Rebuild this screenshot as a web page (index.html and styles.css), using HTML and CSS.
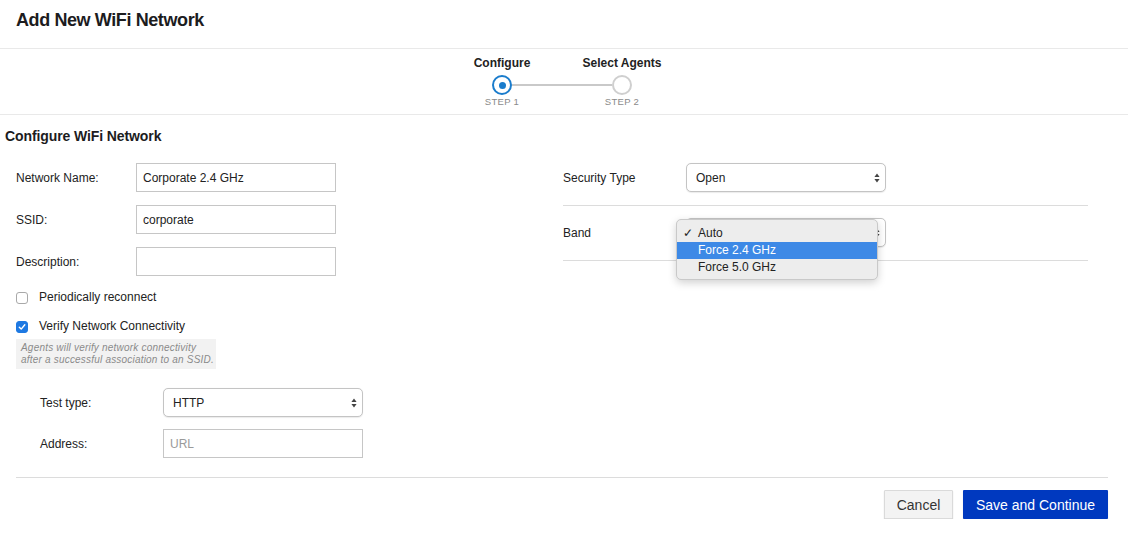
FILE: index.html
```html
<!DOCTYPE html>
<html>
<head>
<meta charset="utf-8">
<link rel="stylesheet" href="styles.css">
</head>
<body>
<div class="page">
  <header class="header">
    <h1 class="title">Add New WiFi Network</h1>
  </header>

  <div class="stepper">
    <div class="steps">
      <div class="step-title s1">Configure</div>
      <div class="step-title s2">Select Agents</div>
      <div class="circle active"><span class="dot"></span></div>
      <div class="connector"></div>
      <div class="circle"></div>
      <div class="step-label s1">STEP 1</div>
      <div class="step-label s2">STEP 2</div>
    </div>
  </div>

  <main class="content">
    <h2 class="section-title">Configure WiFi Network</h2>
    <div class="columns">
      <div class="col-left">
        <div class="field">
          <label class="label">Network Name:</label>
          <div class="input">Corporate 2.4 GHz</div>
        </div>
        <div class="field">
          <label class="label">SSID:</label>
          <div class="input">corporate</div>
        </div>
        <div class="field">
          <label class="label">Description:</label>
          <div class="input"></div>
        </div>

        <div class="check-row first">
          <span class="checkbox"></span>
          <span class="check-text">Periodically reconnect</span>
        </div>
        <div class="check-row">
          <span class="checkbox checked">
            <svg width="8" height="8" viewBox="0 0 8 8"><path d="M1.3 4.3 L3.2 6.1 L6.8 1.8" fill="none" stroke="#fff" stroke-width="1.4" stroke-linecap="round" stroke-linejoin="round"/></svg>
          </span>
          <span class="check-text">Verify Network Connectivity</span>
        </div>
        <div class="help">Agents will verify network connectivity<br>after a successful association to an SSID.</div>

        <div class="sub-fields">
          <div class="field sub">
            <label class="label">Test type:</label>
            <div class="select">HTTP
              <svg class="arrows" width="6" height="10" viewBox="0 0 6 10"><path d="M3 0.5 L5.6 4 L0.4 4 Z M3 9.5 L5.6 6 L0.4 6 Z" fill="#444"/></svg>
            </div>
          </div>
          <div class="field sub">
            <label class="label">Address:</label>
            <div class="input placeholder">URL</div>
          </div>
        </div>
      </div>

      <div class="col-right">
        <div class="rfield">
          <label class="label rlabel">Security Type</label>
          <div class="select">Open
            <svg class="arrows" width="6" height="10" viewBox="0 0 6 10"><path d="M3 0.5 L5.6 4 L0.4 4 Z M3 9.5 L5.6 6 L0.4 6 Z" fill="#444"/></svg>
          </div>
        </div>
        <div class="rfield">
          <label class="label rlabel">Band</label>
          <div class="select-wrap">
            <div class="select">Auto
              <svg class="arrows" width="6" height="10" viewBox="0 0 6 10"><path d="M3 0.5 L5.6 4 L0.4 4 Z M3 9.5 L5.6 6 L0.4 6 Z" fill="#444"/></svg>
            </div>
            <ul class="menu">
              <li class="opt"><span class="tick">✓</span>Auto</li>
              <li class="opt hl">Force 2.4 GHz</li>
              <li class="opt">Force 5.0 GHz</li>
            </ul>
          </div>
        </div>
      </div>
    </div>

    <div class="footer">
      <button class="btn cancel">Cancel</button>
      <button class="btn primary">Save and Continue</button>
    </div>
  </main>
</div>
</body>
</html>
```

FILE: styles.css
```css
* { box-sizing: border-box; }
html, body { margin: 0; padding: 0; background: #fff; }
body {
  font-family: "Liberation Sans", Arial, sans-serif;
  color: #222;
  font-size: 12px;
}
.page { width: 1128px; }

.header {
  height: 49px;
  padding: 9px 16px 0;
  border-bottom: 1px solid #e9e9e9;
}
.title {
  margin: 0;
  font-size: 18px;
  line-height: 22px;
  font-weight: bold;
  letter-spacing: -0.4px;
  color: #1c1c1e;
}

.stepper {
  height: 66px;
  border-bottom: 1px solid #e9e9e9;
  display: flex;
  justify-content: center;
  padding: 7px 4px 0 0;
}
.steps {
  display: grid;
  grid-template-columns: 20px 100px 20px;
  grid-template-rows: 14px 25px 18px;
  align-items: start;
}
.step-title {
  font-weight: bold;
  font-size: 12px;
  line-height: 14px;
  white-space: nowrap;
  justify-self: center;
  color: #222;
}
.step-title.s1 { grid-column: 1; grid-row: 1; }
.step-title.s2 { grid-column: 3; grid-row: 1; }
.circle {
  grid-row: 2;
  margin-top: 5px;
  width: 20px;
  height: 20px;
  border-radius: 50%;
  border: 2px solid #cfcfcf;
  display: flex;
  align-items: center;
  justify-content: center;
}
.circle.active { grid-column: 1; border-color: #1a7ccc; }
.circle:not(.active) { grid-column: 3; }
.dot { width: 7px; height: 7px; border-radius: 50%; background: #1a7ccc; }
.connector {
  grid-column: 2;
  grid-row: 2;
  margin-top: 14px;
  height: 2px;
  background: #c9c9c9;
}
.step-label {
  grid-row: 3;
  margin-top: 1px;
  font-size: 9.5px;
  line-height: 12px;
  color: #8a8a8a;
  white-space: nowrap;
  justify-self: center;
  letter-spacing: 0.3px;
}
.step-label.s1 { grid-column: 1; }
.step-label.s2 { grid-column: 3; }

.content { padding: 13px 20px 0 16px; }
.section-title {
  margin: 0 0 19px -11px;
  font-size: 14px;
  line-height: 16px;
  font-weight: bold;
  letter-spacing: -0.1px;
  color: #1c1c1e;
}
.columns {
  display: grid;
  grid-template-columns: 547px 525px;
}

.field {
  display: flex;
  align-items: center;
  height: 29px;
  margin-bottom: 13px;
}
.label {
  width: 120px;
  flex: none;
  font-size: 12px;
  color: #222;
}
.input {
  width: 200px;
  height: 29px;
  border: 1px solid #c6c6c6;
  padding: 0 6px;
  display: flex;
  align-items: center;
  font-size: 12px;
  color: #222;
}
.input.placeholder { color: #9a9a9a; }

.check-row {
  display: flex;
  align-items: center;
  height: 16px;
  margin-bottom: 13px;
}
.checkbox {
  width: 12px;
  height: 12px;
  border: 1px solid #a9a9a9;
  border-radius: 3px;
  margin-right: 11px;
  margin-top: 2px;
  display: flex;
  align-items: center;
  justify-content: center;
  background: #fff;
}
.checkbox.checked {
  background: #1e79e2;
  border-color: #1e79e2;
}
.check-text { font-size: 12px; color: #222; }

.help {
  margin-top: -8px;
  width: 200px;
  background: #f2f2f2;
  padding: 3px 5px 4px;
  font-size: 10px;
  line-height: 11.5px;
  letter-spacing: 0.2px;
  white-space: nowrap;
  font-style: italic;
  color: #8a8a8a;
}

.sub-fields { padding-left: 24px; margin-top: 19px; }
.field.sub { margin-bottom: 12px; }
.field.sub .label { width: 123px; }

.select {
  position: relative;
  width: 200px;
  height: 29px;
  border: 1px solid #c4c4c4;
  border-radius: 5px;
  padding: 0 9px;
  display: flex;
  align-items: center;
  font-size: 12px;
  color: #222;
  background: #fff;
  box-shadow: 0 0.5px 1px rgba(0,0,0,0.08);
}
.arrows { position: absolute; right: 5px; top: 9px; }

.rfield {
  display: flex;
  align-items: center;
  padding-bottom: 13px;
  border-bottom: 1px solid #dcdcdc;
  margin-bottom: 12px;
  box-sizing: content-box;
  height: 29px;
}
.rlabel { width: 123px; }

.select-wrap { position: relative; }
.menu {
  position: absolute;
  left: -10px;
  top: 1px;
  width: 202px;
  margin: 0;
  padding: 5px 0 3px;
  list-style: none;
  background: #ededed;
  border: 1px solid #c9c9c9;
  border-radius: 5px;
  box-shadow: 0 3px 8px rgba(0,0,0,0.18);
  z-index: 5;
}
.opt {
  position: relative;
  height: 17px;
  line-height: 17px;
  padding-left: 21px;
  font-size: 12px;
  color: #222;
}
.opt.hl { background: #3d89e6; color: #fff; }
.tick {
  position: absolute;
  left: 6px;
  top: 0;
  font-size: 12px;
}

.footer {
  margin-top: 7px;
  border-top: 1px solid #dcdcdc;
  padding-top: 12px;
  display: flex;
  justify-content: flex-end;
  gap: 10px;
  width: 1092px;
}
.btn {
  height: 29px;
  font-family: "Liberation Sans", Arial, sans-serif;
  font-size: 14px;
  border-radius: 1px;
  cursor: pointer;
}
.btn.cancel {
  width: 69px;
  background: #f3f3f3;
  color: #333;
  border: 1px solid #dadada;
  box-shadow: 0 1px 1px rgba(0,0,0,0.25);
}
.btn.primary {
  width: 145px;
  background: #0039bf;
  color: #fff;
  border: none;
  box-shadow: 0 1px 1px rgba(0,0,0,0.2);
}
```
